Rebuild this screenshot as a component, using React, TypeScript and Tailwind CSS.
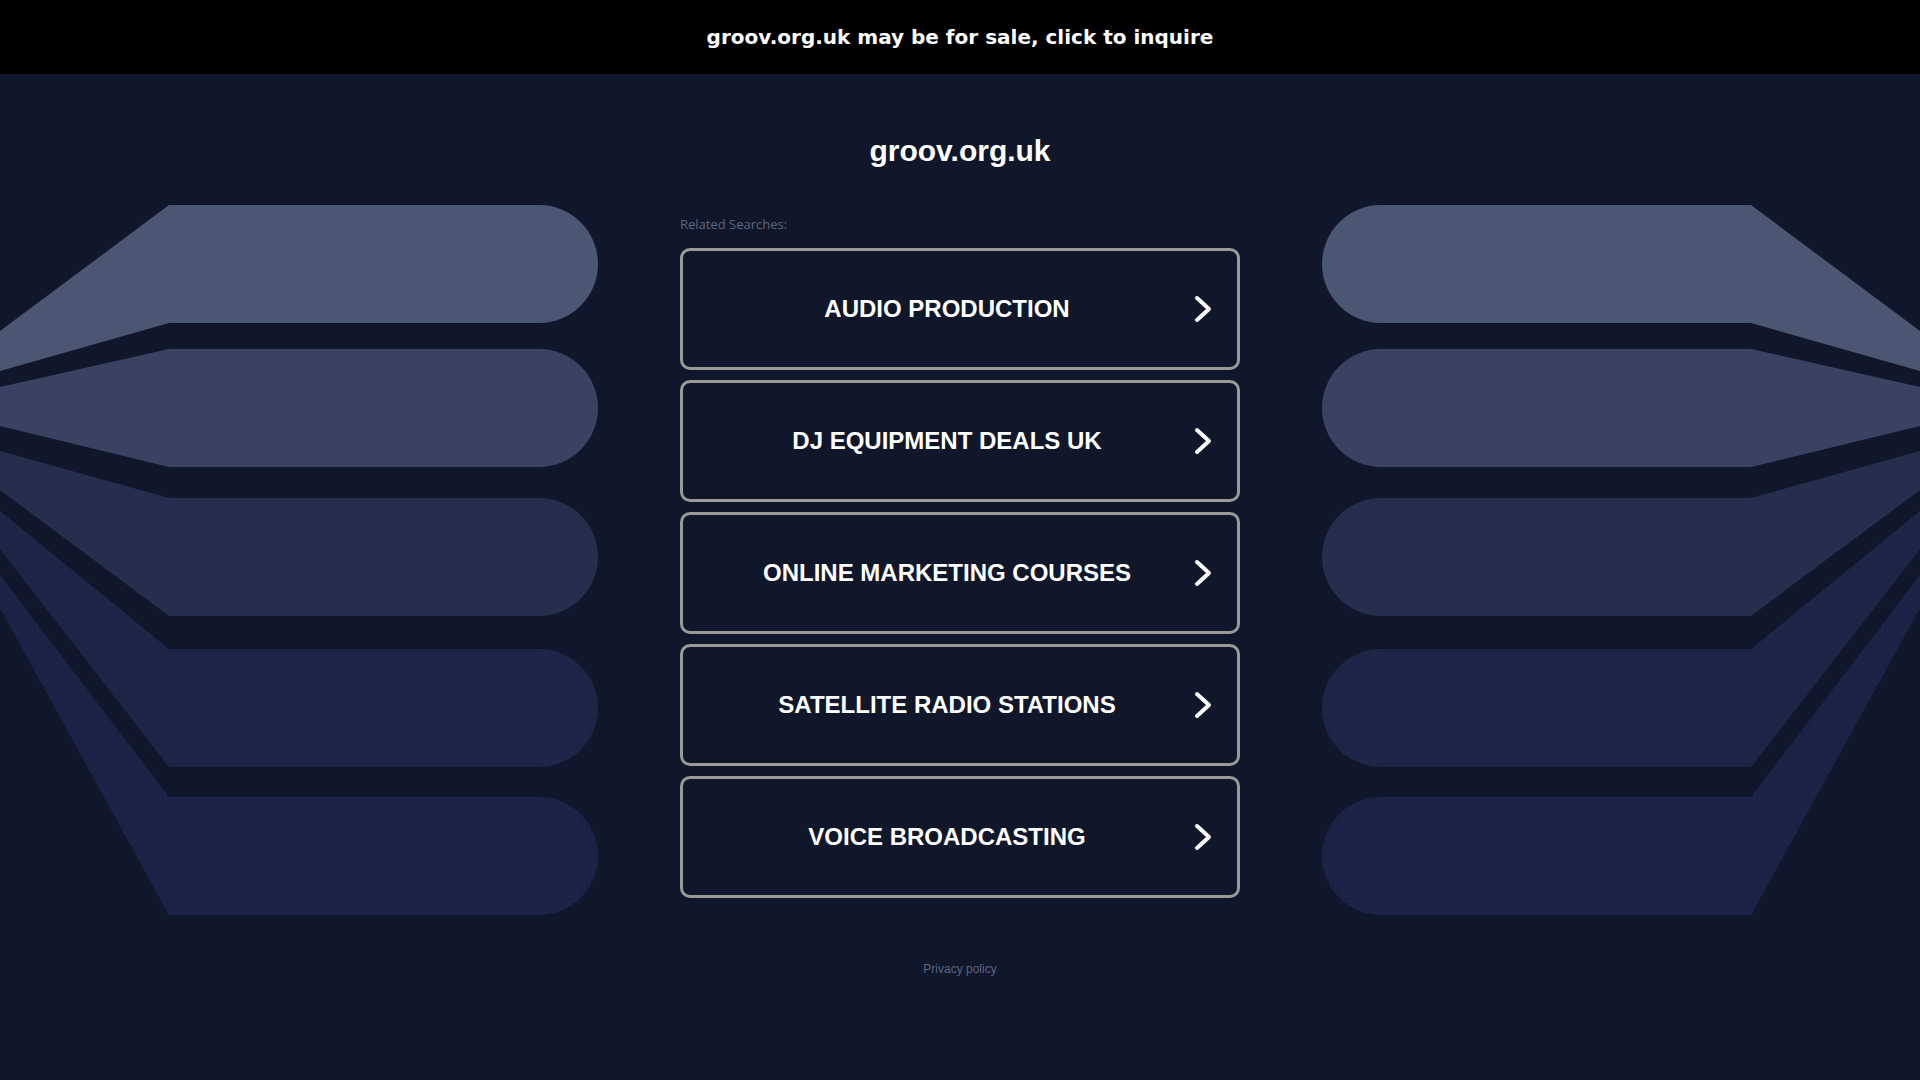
import React from "react";

const searches = [
  "AUDIO PRODUCTION",
  "DJ EQUIPMENT DEALS UK",
  "ONLINE MARKETING COURSES",
  "SATELLITE RADIO STATIONS",
  "VOICE BROADCASTING",
];

// stripe geometry in page pixels: top, bottom, left tip top, left tip bottom
const stripes = [
  { top: 205, bottom: 323, tipTop: 331, tipBottom: 371, fill: "#4b5673" },
  { top: 349, bottom: 467, tipTop: 387, tipBottom: 426, fill: "#394260" },
  { top: 498, bottom: 616, tipTop: 451, tipBottom: 490, fill: "#252e4d" },
  { top: 649, bottom: 767, tipTop: 511, tipBottom: 549, fill: "#1c2546" },
  { top: 797, bottom: 915, tipTop: 575, tipBottom: 608, fill: "#1a2345" },
];

const stripePath = (s: (typeof stripes)[number]) => {
  const r = (s.bottom - s.top) / 2;
  return `M0 ${s.tipTop} L169 ${s.top} L${598 - r} ${s.top} A${r} ${r} 0 0 1 ${598 - r} ${s.bottom} L169 ${s.bottom} L0 ${s.tipBottom} Z`;
};

const Backdrop = () => (
  <svg
    className="absolute top-0 left-0 w-full h-full pointer-events-none"
    viewBox="0 0 1920 1080"
    preserveAspectRatio="none"
  >
    <defs>
      <pattern id="dots" width="4" height="4" patternUnits="userSpaceOnUse">
        <circle cx="1" cy="1" r="0.6" fill="#2a3560" />
      </pattern>
    </defs>
    {[false, true].map((mirror) => (
      <g key={String(mirror)} transform={mirror ? "translate(1920 0) scale(-1 1)" : undefined}>
        {stripes.map((s, i) => (
          <React.Fragment key={i}>
            <path d={stripePath(s)} fill={s.fill} />
            {i > 2 && <path d={stripePath(s)} fill="url(#dots)" opacity="0.6" />}
          </React.Fragment>
        ))}
      </g>
    ))}
  </svg>
);

const Chevron = () => (
  <svg width="24" height="28" viewBox="0 0 24 28" fill="none">
    <path
      d="M6 3 L18 14 L6 25"
      stroke="#ffffff"
      strokeWidth="4"
      strokeLinecap="round"
      strokeLinejoin="round"
    />
  </svg>
);

export default function App() {
  return (
    <div className="relative min-h-screen overflow-hidden bg-[#11172b]">
      <Backdrop />

      <div className="relative flex h-[74px] items-center justify-center bg-black">
        <a
          href="#"
          className="text-[20px] font-bold text-white"
          style={{ fontFamily: '"DejaVu Sans", sans-serif' }}
        >
          groov.org.uk may be for sale, click to inquire
        </a>
      </div>

      <main
        className="relative mx-auto flex w-[560px] flex-col"
        style={{ fontFamily: '"Liberation Sans", Arial, sans-serif' }}
      >
        <h1 className="mt-[59px] text-center text-[30px] leading-[36px] font-bold text-white">
          groov.org.uk
        </h1>

        <p
          className="mt-[47px] text-[13px] leading-[17px] text-[#5d667c]"
          style={{ fontFamily: '"Open Sans", sans-serif' }}
        >
          Related Searches:
        </p>

        <div className="mt-[15px] flex flex-col gap-[10px]">
          {searches.map((label) => (
            <a
              key={label}
              href="#"
              className="flex h-[122px] items-center rounded-[10px] border-[3px] border-[#9a9a9a] bg-[#11172b] pl-5 pr-[22px]"
            >
              <span className="flex-1 text-center text-[24px] font-bold text-white">
                {label}
              </span>
              <Chevron />
            </a>
          ))}
        </div>

        <div className="mt-[63px] text-center text-[12px] leading-[16px] text-[#5b6480]">
          <a href="#">Privacy policy</a>
        </div>
      </main>
    </div>
  );
}
